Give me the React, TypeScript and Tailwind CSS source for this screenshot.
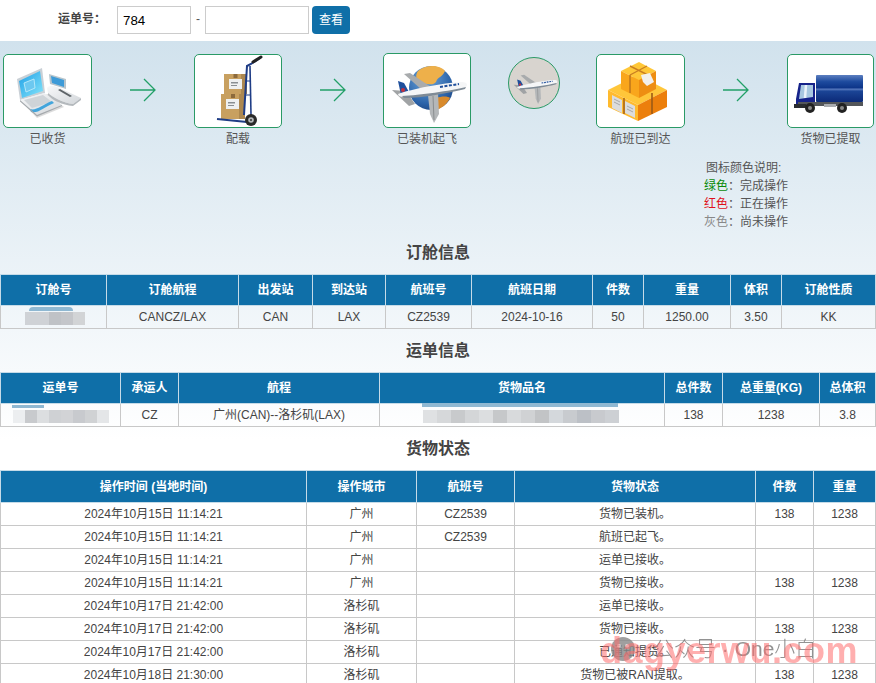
import React from "react";

const font = "[font-family:'Liberation_Sans','Noto_Sans_CJK_SC',sans-serif]";

const LaptopIcon = () => (
  <svg width="87" height="72" viewBox="0 0 87 72">
    <defs>
      <linearGradient id="lapScreen" x1="0" y1="0" x2="1" y2="1">
        <stop offset="0" stopColor="#1f9fe6" />
        <stop offset="1" stopColor="#86e6fb" />
      </linearGradient>
      <linearGradient id="lapBase" x1="0" y1="0" x2="1" y2="1">
        <stop offset="0" stopColor="#f8f9fa" />
        <stop offset="1" stopColor="#d2d6da" />
      </linearGradient>
    </defs>
    <path d="M17 46 L33 63 L60 52 L44 39Z" fill="#9a9a9a" opacity=".35" />
    <path d="M13 24 L38 13 L41 38 L16 45Z" fill="#c9d0d6" />
    <path d="M15 26 L36 16 L39 36 L18 43Z" fill="url(#lapScreen)" />
    <path d="M20 28 L30 24 L31 33 L22 37Z" fill="#6cc8f0" stroke="#c8effb" strokeWidth=".8" />
    <path d="M16 45 L40 38 L58 50 L33 60Z" fill="url(#lapBase)" />
    <path d="M20 45 L39 40 L48 47 L28 53Z" fill="#cfd4d8" />
    <path d="M26 54 C32 56 38 50 48 46 L50 48 C40 52 34 59 27 57Z" fill="#42a5dc" />
    <path d="M16 45 L33 60 L58 50 L58 51 L33 61.5 L16 46.5Z" fill="#a4a9ad" />
    <path d="M45 19 L62 24 L62 34 L46 29Z" fill="#b8c5cc" />
    <path d="M47 21 L60 25 L60 32 L48 28Z" fill="#3d9bd8" />
    <path d="M43 33 C46 29 52 31 60 35 L77 43 L69 49 C60 48 48 42 44 38Z" fill="url(#lapBase)" />
    <path d="M56 34 L68 41 L66 42 L54 35Z" fill="#5e6468" />
    <path d="M44 38 C48 42 60 48 69 49 L77 43 L77 45 L69 51 C58 50 48 45 44 40Z" fill="#b4b9bd" />
  </svg>
);

const Carton = ({ x, y, w, h }: { x: number; y: number; w: number; h: number }) => (
  <g>
    <rect x={x} y={y} width={w} height={h} fill="#c8a060" />
    <rect x={x + w - 6} y={y} width="6" height={h} fill="#ad8850" />
    <rect x={x + w / 2 - 2} y={y} width="4" height="4" fill="#8c6a3c" />
    <rect x={x + 5} y={y + 5} width="13" height="10" fill="#eef0f0" />
    <rect x={x + 7} y={y + 8} width="7" height="1.5" fill="#8a8f92" />
    <rect x={x + 7} y={y + 11} width="6" height="1" fill="#8a8f92" />
  </g>
);

const TruckDollyIcon = () => (
  <svg width="86" height="72" viewBox="0 0 86 72">
    <Carton x={29} y={19} w={23} h={20} />
    <Carton x={26} y={39} w={24} h={25} />
    <path d="M65 3 L56 9 L52 11 L49 60" fill="none" stroke="#1f3d86" strokeWidth="2" />
    <path d="M55 11 L56 60" fill="none" stroke="#1f3d86" strokeWidth="1.6" />
    <path d="M50 26 L55 26 M50 40 L56 40" stroke="#1f3d86" strokeWidth="1.2" />
    <path d="M66 2 L58 7" stroke="#222" strokeWidth="3" strokeLinecap="round" />
    <path d="M22 64 L52 67" stroke="#1f3d86" strokeWidth="2" />
    <circle cx="56" cy="65" r="6" fill="#2a2a2a" />
    <circle cx="56" cy="65" r="2.8" fill="#b5b8ba" />
    <circle cx="56" cy="65" r="1" fill="#333" />
  </svg>
);

const Plane = () => (
  <g>
    <path d="M44 41 L54 39 L55 60 L50 69 L46 60Z" fill="#b4b7b9" />
    <path d="M49 42 L50 66" stroke="#8a8d8f" strokeWidth="1" />
    <path d="M20 20 L26 19 L47 33 L38 36Z" fill="#a8abad" />
    <path d="M8 36 L22 37 L31 50 L25 52Z" fill="#a0a3a5" />
    <path d="M14 27 L20 29 L25 38 L17 41Z" fill="#1f4f9c" />
    <circle cx="19" cy="36" r="2" fill="#c4303c" />
    <path d="M14 40 C28 35 58 29 78 28 C83 28 84 31 82 33 C70 37 40 43 20 43 C16 43 14 42 14 40Z" fill="#f5f6f7" />
    <path d="M18 42 C36 41 66 37 82 33 L81 35 C66 39 38 44 20 44Z" fill="#7f8b96" />
    <path d="M56 33 L75 30" stroke="#1f4f9c" strokeWidth="2" strokeDasharray="3 1.5" />
  </g>
);

const GlobePlaneIcon = () => (
  <svg width="86" height="73" viewBox="0 0 86 73">
    <defs>
      <radialGradient id="globe" cx=".4" cy=".3" r=".8">
        <stop offset="0" stopColor="#6fa8dc" />
        <stop offset=".7" stopColor="#2a62a8" />
        <stop offset="1" stopColor="#1b3f78" />
      </radialGradient>
    </defs>
    <circle cx="47" cy="34" r="22" fill="url(#globe)" />
    <path d="M34 17 C42 10 56 11 61 17 C58 24 54 22 52 28 C48 33 42 28 36 30 C32 26 31 21 34 17Z" fill="#eeb04a" />
    <path d="M52 44 C58 42 64 42 66 44 C63 50 57 55 52 56 C50 52 50 48 52 44Z" fill="#d88a2c" />
    <Plane />
  </svg>
);

const CartonStackIcon = () => (
  <svg width="87" height="72" viewBox="0 0 87 72">
    <path d="M11 35 L41 20 L70 35 L41 50Z" fill="#ffc63a" />
    <path d="M11 35 L41 50 L41 66 L11 52Z" fill="#ffba2e" />
    <path d="M41 50 L70 35 L70 52 L41 66Z" fill="#ec7f0c" />
    <path d="M24 16 L42 7 L59 16 L42 25Z" fill="#ffc738" />
    <path d="M24 16 L42 25 L42 43 L24 34Z" fill="#f9a61c" />
    <path d="M42 25 L59 16 L59 34 L42 43Z" fill="#ee8e12" />
    <path d="M33 11 L51 20 L51 24 M33 20 L50 11" fill="none" stroke="#c97f22" strokeWidth="1.4" />
    <path d="M33 20 L33 38" stroke="#b9721c" strokeWidth="1.4" />
    <path d="M55 38 L55 59" stroke="#9c5a16" strokeWidth="1.6" />
    <path d="M27 43 L27 59" stroke="#a8651a" strokeWidth="1.6" />
    <path d="M44 20 L53 18 L57 27 L50 31 L46 27Z" fill="#f2f0ec" />
    <path d="M15 40 L25 45 L25 58 L15 53Z M28 46 L38 51 L38 63 L28 58Z" fill="#dcdcdc" />
    <path d="M17 44 L23 47 M17 47 L23 50 M30 51 L36 54 M30 54 L36 57" stroke="#999" strokeWidth=".8" />
  </svg>
);

const TruckIcon = () => (
  <svg width="85" height="72" viewBox="0 0 85 72">
    <defs>
      <linearGradient id="cargo" x1="0" y1="0" x2="0" y2="1">
        <stop offset="0" stopColor="#5d7fc0" />
        <stop offset=".25" stopColor="#1d4a9e" />
        <stop offset=".48" stopColor="#0d3488" />
        <stop offset=".52" stopColor="#5b7cc0" />
        <stop offset=".6" stopColor="#1b4596" />
        <stop offset="1" stopColor="#0c2a78" />
      </linearGradient>
    </defs>
    <rect x="28" y="20" width="47" height="27" rx="1" fill="url(#cargo)" />
    <path d="M11 28 L27 28 L27 50 L8 50 L8 44Z" fill="#16238a" />
    <path d="M13 30 L25 30 L25 42 L11 44Z" fill="#a8c8e0" />
    <path d="M18 30 L17 43" stroke="#ecf4fa" strokeWidth="2.5" />
    <rect x="10" y="47" width="65" height="4" fill="#53565a" />
    <rect x="6" y="49" width="12" height="4" fill="#2a2c30" />
    <rect x="36" y="49" width="12" height="3" fill="#a8abaf" />
    <circle cx="22" cy="53" r="5" fill="#222" />
    <circle cx="22" cy="53" r="2" fill="#888" />
    <circle cx="54" cy="53" r="5" fill="#222" />
    <circle cx="54" cy="53" r="2" fill="#888" />
  </svg>
);

const Arrow = () => (
  <svg width="26" height="24" viewBox="0 0 26 24" className="mt-[24px] shrink-0">
    <path d="M0 12 H25 M14 1 L25 12 L14 23" fill="none" stroke="#22a068" strokeWidth="1.3" />
  </svg>
);

const Step = ({
  label,
  width,
  high,
  children,
}: {
  label: string;
  width: string;
  high?: boolean;
  children: React.ReactNode;
}) => (
  <div className={`flex shrink-0 flex-col items-center ${width}`}>
    <div
      className={`flex w-full items-center justify-center rounded-[5px] border border-[#2a9a66] bg-white ${
        high ? "-mt-px h-[75px]" : "h-[74px]"
      }`}
    >
      {children}
    </div>
    <div className="mt-[3px] whitespace-nowrap text-xs leading-[16px] text-[#555]">{label}</div>
  </div>
);

const Mosaic = ({ colors, size = 12 }: { colors: string[]; size?: number }) => (
  <div className="flex blur-[0.6px]">
    {colors.map((c, i) => (
      <div key={i} style={{ backgroundColor: c, width: size, height: 13 }} />
    ))}
  </div>
);

const Th = ({ children }: { children?: React.ReactNode }) => (
  <th className="border border-[#c5dbe8] bg-[#0f6fa8] p-0 text-center text-xs font-bold text-white">
    {children}
  </th>
);

const Td = ({ children, className = "" }: { children?: React.ReactNode; className?: string }) => (
  <td className={`relative border border-[#c8c8c8] p-0 text-center text-xs text-[#444] ${className}`}>
    {children}
  </td>
);

const Title = ({ children }: { children: React.ReactNode }) => (
  <h2 className="flex h-[43px] items-center justify-center text-base font-bold text-[#444]">{children}</h2>
);

const statusRows = [
  ["2024年10月15日 11:14:21", "广州", "CZ2539", "货物已装机。", "138", "1238"],
  ["2024年10月15日 11:14:21", "广州", "CZ2539", "航班已起飞。", "", ""],
  ["2024年10月15日 11:14:21", "广州", "", "运单已接收。", "", ""],
  ["2024年10月15日 11:14:21", "广州", "", "货物已接收。", "138", "1238"],
  ["2024年10月17日 21:42:00", "洛杉矶", "", "运单已接收。", "", ""],
  ["2024年10月17日 21:42:00", "洛杉矶", "", "货物已接收。", "138", "1238"],
  ["2024年10月17日 21:42:00", "洛杉矶", "", "已通知提货。", "", ""],
  ["2024年10月18日 21:30:00", "洛杉矶", "", "货物已被RAN提取。", "138", "1238"],
];

export default function App() {
  return (
    <div className={`relative h-[683px] w-[876px] overflow-hidden bg-white ${font}`}>
      <div className="flex h-[41px] items-start pt-[6px]">
        <span className="ml-[58px] w-[59px] pt-[5px] text-xs font-bold leading-[16px] text-[#444]">运单号：</span>
        <input
          readOnly
          value="784"
          className="h-[28px] w-[74px] border border-[#ccc] bg-white px-[5px] text-[13.33px] text-black"
        />
        <span className="w-[14px] pt-[5px] text-center text-xs leading-[16px] text-[#555]">-</span>
        <input readOnly className="h-[28px] w-[104px] border border-[#ccc] bg-white" />
        <button className="ml-[3px] h-[28px] w-[38px] rounded-[4px] bg-[#0f6fa8] text-xs text-white">查看</button>
      </div>

      <div className="bg-gradient-to-b from-[#d1e2ed] to-white">
        <div className="flex items-start pt-[13px] pl-[3px]">
          <Step label="已收货" width="w-[89px]">
            <LaptopIcon />
          </Step>
          <div className="ml-[38px]">
            <Arrow />
          </div>
          <div className="ml-[38px]">
            <Step label="配载" width="w-[88px]">
              <TruckDollyIcon />
            </Step>
          </div>
          <div className="ml-[38px]">
            <Arrow />
          </div>
          <div className="ml-[37px]">
            <Step label="已装机起飞" width="w-[88px]" high>
              <GlobePlaneIcon />
            </Step>
          </div>
          <div className="mt-[3px] ml-[37px] flex h-[52px] w-[52px] items-center justify-center overflow-hidden rounded-full border border-[#2a9a66] bg-[#d8d4cf]">
            <svg width="50" height="50" viewBox="0 0 86 86">
              <g transform="translate(0 10)">
                <Plane />
              </g>
            </svg>
          </div>
          <div className="ml-[36px]">
            <Step label="航班已到达" width="w-[89px]">
              <CartonStackIcon />
            </Step>
          </div>
          <div className="ml-[38px]">
            <Arrow />
          </div>
          <div className="ml-[38px]">
            <Step label="货物已提取" width="w-[87px]">
              <TruckIcon />
            </Step>
          </div>
        </div>

        <div className="ml-[704px] w-[100px] pt-[12px] text-xs leading-[18px] text-[#555]">
          <div className="pl-[2px]">图标颜色说明:</div>
          <div>
            <span className="text-[#0a8a0a]">绿色</span>：完成操作
          </div>
          <div>
            <span className="text-[#e0101a]">红色</span>：正在操作
          </div>
          <div>
            <span className="text-[#888]">灰色</span>：尚未操作
          </div>
        </div>

        <Title>订舱信息</Title>
        <table className="w-full table-fixed border-collapse">
          <colgroup>
            <col className="w-[106px]" />
            <col className="w-[132px]" />
            <col className="w-[74px]" />
            <col className="w-[73px]" />
            <col className="w-[86px]" />
            <col className="w-[121px]" />
            <col className="w-[51px]" />
            <col className="w-[87px]" />
            <col className="w-[51px]" />
            <col />
          </colgroup>
          <thead>
            <tr className="h-[31px]">
              {["订舱号", "订舱航程", "出发站", "到达站", "航班号", "航班日期", "件数", "重量", "体积", "订舱性质"].map((h) => (
                <Th key={h}>{h}</Th>
              ))}
            </tr>
          </thead>
          <tbody>
            <tr className="h-[23px]">
              <Td>
                <div className="absolute top-[1px] left-[28px] h-[4px] w-[44px] rounded-t-sm bg-[#8fb8d2] blur-[0.5px]" />
                <div className="absolute top-[6px] left-[24px]">
                  <Mosaic colors={["#cfd2d6", "#cfd2d6", "#bfc2c6", "#c4c6ca", "#d2d4d6"]} />
                </div>
              </Td>
              <Td>CANCZ/LAX</Td>
              <Td>CAN</Td>
              <Td>LAX</Td>
              <Td>CZ2539</Td>
              <Td>2024-10-16</Td>
              <Td>50</Td>
              <Td>1250.00</Td>
              <Td>3.50</Td>
              <Td>KK</Td>
            </tr>
          </tbody>
        </table>

        <Title>运单信息</Title>
        <table className="w-full table-fixed border-collapse">
          <colgroup>
            <col className="w-[120px]" />
            <col className="w-[58px]" />
            <col className="w-[201px]" />
            <col className="w-[285px]" />
            <col className="w-[58px]" />
            <col className="w-[97px]" />
            <col />
          </colgroup>
          <thead>
            <tr className="h-[31px]">
              {["运单号", "承运人", "航程", "货物品名", "总件数", "总重量(KG)", "总体积"].map((h) => (
                <Th key={h}>{h}</Th>
              ))}
            </tr>
          </thead>
          <tbody>
            <tr className="h-[23px]">
              <Td>
                <div className="absolute top-[1px] left-[11px] h-[3px] w-[32px] bg-[#8fb8d2] blur-[0.5px]" />
                <div className="absolute top-[6px] left-[12px]">
                  <Mosaic colors={["#eceef0", "#c8cacd", "#dcdee0", "#cfd1d4", "#d2d3d6", "#c8cace", "#d0d2d4", "#e4e6e8"]} />
                </div>
              </Td>
              <Td>CZ</Td>
              <Td>广州(CAN)--洛杉矶(LAX)</Td>
              <Td>
                <div className="absolute top-[-1px] left-[42px] h-[4px] w-[196px] bg-[#8fb8d2] blur-[0.5px]" />
                <div className="absolute top-[6px] left-[43px]">
                  <Mosaic
                    size={14}
                    colors={["#dfe1e3", "#d6d8da", "#c8cacc", "#d4d6d8", "#dcdee0", "#c6c8ca", "#d8dadc", "#d0d2d4", "#c2c4c6", "#d4d8dc", "#c8cbcf", "#bcc0c6", "#c8cace", "#cdd0d4"]}
                  />
                </div>
              </Td>
              <Td>138</Td>
              <Td>1238</Td>
              <Td>3.8</Td>
            </tr>
          </tbody>
        </table>
        <div className="h-[13px]" />
      </div>

      <div className="-mt-[13px]">
        <Title>货物状态</Title>
        <table className="w-full table-fixed border-collapse">
          <colgroup>
            <col className="w-[306px]" />
            <col className="w-[110px]" />
            <col className="w-[98px]" />
            <col className="w-[241px]" />
            <col className="w-[58px]" />
            <col />
          </colgroup>
          <thead>
            <tr className="h-[32px]">
              {["操作时间 (当地时间)", "操作城市", "航班号", "货物状态", "件数", "重量"].map((h) => (
                <Th key={h}>{h}</Th>
              ))}
            </tr>
          </thead>
          <tbody>
            {statusRows.map((row, i) => (
              <tr key={i} className="h-[23px]">
                {row.map((cell, j) => (
                  <Td key={j}>{cell}</Td>
                ))}
              </tr>
            ))}
          </tbody>
        </table>
      </div>

      <div className="pointer-events-none absolute top-[636px] left-[611px] flex items-center text-[#777] opacity-80">
        <div className="relative h-[24px] w-[24px] rounded-full bg-[#888]">
          <div className="absolute top-[7px] left-[6px] h-[4px] w-[4px] rounded-full bg-[#ddd]" />
          <div className="absolute top-[7px] left-[14px] h-[4px] w-[4px] rounded-full bg-[#ddd]" />
        </div>
        <span className="ml-[18px] text-[21px] leading-[26px] font-light whitespace-nowrap">公众号 · One小白</span>
      </div>
      <div className="pointer-events-none absolute top-[631px] left-[600px] text-[36px] leading-[40px] font-bold tracking-[0.5px] whitespace-nowrap text-[#ff6f6f] opacity-55">
        dagyerwu.com
      </div>
    </div>
  );
}
